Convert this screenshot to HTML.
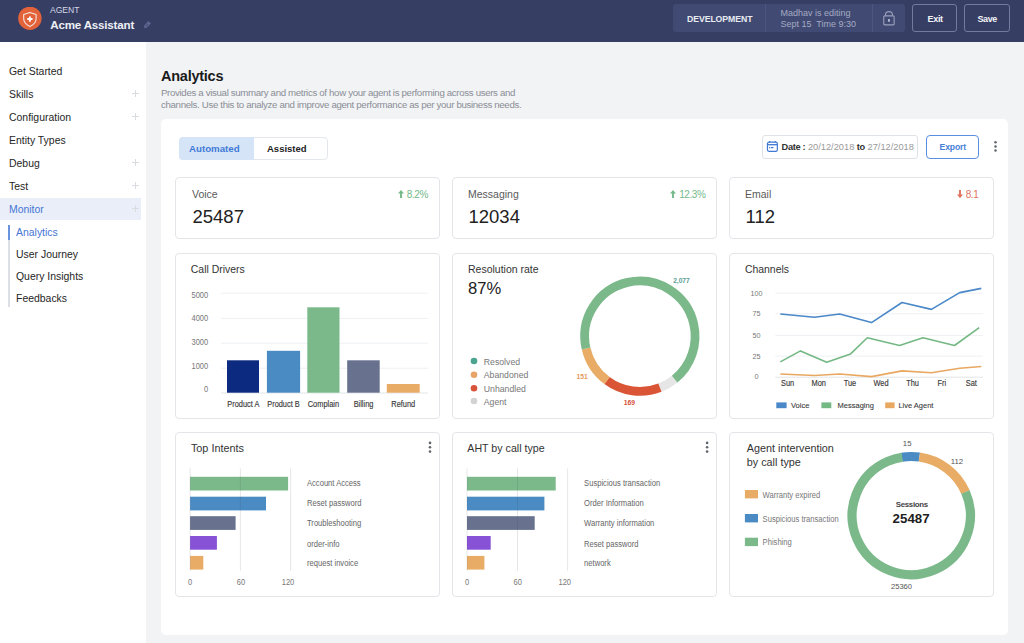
<!DOCTYPE html>
<html><head><meta charset="utf-8">
<style>
*{box-sizing:border-box;margin:0;padding:0}
html,body{width:1024px;height:643px;overflow:hidden;background:#f2f3f5;font-family:"Liberation Sans",sans-serif;color:#2b2b2b}
.a{position:absolute;white-space:nowrap}
#hdr{position:absolute;left:0;top:0;width:1024px;height:42px;background:#363e64}
#side{position:absolute;left:0;top:42px;width:146px;height:601px;background:#fff}
.nav{position:absolute;left:9px;font-size:10.45px;color:#262626}
.plus{position:absolute;left:131.5px;width:7px;height:7px;margin-top:0.1px}
.plus:before,.plus:after{content:"";position:absolute;background:#d9dce1}
.plus:before{left:3px;top:0;width:1px;height:7px}
.plus:after{left:0;top:3px;width:7px;height:1px}
#panel{position:absolute;left:160.5px;top:119px;width:847.5px;height:516px;background:#fff;border-radius:5px}
.card{position:absolute;background:#fff;border:1px solid #e3e5e9;border-radius:4px}
.ttl{position:absolute;font-size:11px;color:#333}
.stl{font-size:10.5px;color:#5a5a5a}
.stn{font-size:18.5px;color:#222}
.up{font-size:10px;letter-spacing:-0.4px;color:#74b98a}
.dn{font-size:10px;letter-spacing:-0.4px;color:#e0725e}
.arr{font-weight:700}
</style></head><body>
<div id="hdr">
  <svg class="a" style="left:18px;top:7px" width="24" height="24" viewBox="0 0 24 24">
    <circle cx="11.9" cy="11.35" r="11.7" fill="#e2623a"/>
    <path d="M5.7 7.4 L11.9 5.4 L18.1 7.4 V11.6 C18.1 15.2 15.6 17.9 11.9 19.4 C8.2 17.9 5.7 15.2 5.7 11.6 Z" fill="none" stroke="#f6e6e0" stroke-width="1.1" stroke-linejoin="round"/>
    <path d="M11.9 9.4 V14.7 M9.25 12.05 H14.55" stroke="#fff" stroke-width="1.9"/>
  </svg>
  <div class="a" style="left:50px;top:5.3px;font-size:8.6px;color:#d5d8e4;letter-spacing:-0.05px">AGENT</div>
  <div class="a" style="left:50.3px;top:17.9px;font-size:11.6px;font-weight:700;color:#eef0f6;letter-spacing:-0.2px">Acme Assistant</div>
  <svg class="a" style="left:143px;top:20px" width="9" height="9" viewBox="0 0 9 9"><path d="M5.5 0.9 L8 3.4 L3.5 7.9 L1.1 8.1 L1.1 5.4 Z" fill="#5c658e"/><path d="M2.6 6.3 L4.9 4" stroke="#3a4268" stroke-width="0.8"/></svg>
  <div class="a" style="left:673px;top:4px;width:232px;height:28px;background:#414a72;border-radius:3px"></div>
  <div class="a" style="left:765px;top:4px;width:1px;height:28px;background:#4d5680"></div>
  <div class="a" style="left:872px;top:4px;width:1px;height:28px;background:#4d5680"></div>
  <div class="a" style="left:687px;top:12.5px;font-size:9.8px;font-weight:700;color:#e8eaf2;letter-spacing:-0.1px;transform:scaleX(0.89);transform-origin:0 0">DEVELOPMENT</div>
  <div class="a" style="left:780.5px;top:7.9px;font-size:9px;line-height:11px;color:#a4aac4">Madhav is editing<br>Sept 15&nbsp; Time 9:30</div>
  <svg class="a" style="left:882px;top:10px" width="14" height="17" viewBox="0 0 14 17">
    <path d="M3.5 5.8 V4.6 C3.5 2.6 5 1.6 6.95 1.6 C8.9 1.6 10.4 2.6 10.4 4.6 V5.8" fill="none" stroke="#9aa0bc" stroke-width="1.1"/>
    <rect x="1.75" y="5.85" width="10.4" height="9" rx="1" fill="none" stroke="#9aa0bc" stroke-width="1.1"/>
    <path d="M6.95 9.1 C7.7 9.1 8.1 9.6 7.95 10.3 L7.5 11.9 H6.4 L5.95 10.3 C5.8 9.6 6.2 9.1 6.95 9.1 Z" fill="#b4b9d0"/>
  </svg>
  <div class="a" style="left:912px;top:4px;width:45px;height:28px;border:1px solid #737b9d;border-radius:3px"></div>
  <div class="a" style="left:964px;top:4px;width:46px;height:28px;border:1px solid #737b9d;border-radius:3px"></div>
  <div class="a" style="left:927.5px;top:13.5px;font-size:9px;font-weight:700;color:#f2f3f7;letter-spacing:-0.3px">Exit</div>
  <div class="a" style="left:977.5px;top:13.5px;font-size:9px;font-weight:700;color:#f2f3f7;letter-spacing:-0.4px">Save</div>
</div>

<div id="side">
  <div class="nav a" style="top:24.2px">Get Started</div>
  <div class="nav a" style="top:47.2px">Skills</div><div class="plus" style="top:48px"></div>
  <div class="nav a" style="top:70.2px">Configuration</div><div class="plus" style="top:71px"></div>
  <div class="nav a" style="top:93.2px">Entity Types</div>
  <div class="nav a" style="top:116.2px">Debug</div><div class="plus" style="top:117px"></div>
  <div class="nav a" style="top:139.2px">Test</div><div class="plus" style="top:140px"></div>
  <div class="a" style="left:0;top:156px;width:141px;height:22px;background:#e9eef9"></div>
  <div class="nav a" style="top:162.2px;color:#4676d4">Monitor</div><div class="plus" style="top:163px"></div>
  <div class="a" style="left:8.3px;top:182.5px;width:1.7px;height:82px;background:#dcdfe4"></div>
  <div class="a" style="left:8.3px;top:182.5px;width:1.7px;height:15px;background:#6a94de"></div>
  <div class="nav a" style="left:16px;top:185.2px;color:#4676d4">Analytics</div>
  <div class="nav a" style="left:16px;top:207.2px">User Journey</div>
  <div class="nav a" style="left:16px;top:229.2px">Query Insights</div>
  <div class="nav a" style="left:16px;top:251.2px">Feedbacks</div>
</div>

<div class="a" style="left:161px;top:68px;font-size:14.5px;font-weight:700;color:#1b1b1b;letter-spacing:-0.25px">Analytics</div>
<div class="a" style="left:161px;top:86.5px;font-size:9.7px;letter-spacing:-0.34px;line-height:12px;color:#8a8e96">Provides a visual summary and metrics of how your agent is performing across users and<br>channels. Use this to analyze and improve agent performance as per your business needs.</div>

<div id="panel"></div>
<!-- tabs -->
<div class="a" style="left:179px;top:137px;width:149px;height:23px;border:1px solid #e3e6eb;border-radius:4px;background:#fff"></div>
<div class="a" style="left:179px;top:137px;width:75px;height:23px;background:#d6e4f8;border-radius:4px 0 0 4px"></div>
<div class="a" style="left:189px;top:143px;font-size:9.7px;font-weight:700;color:#3f7ad6;letter-spacing:0">Automated</div>
<div class="a" style="left:267px;top:143px;font-size:9.5px;font-weight:700;color:#222">Assisted</div>
<!-- date -->
<div class="a" style="left:762px;top:135px;width:156px;height:24px;border:1px solid #dfe2e7;border-radius:3px"></div>
<svg class="a" style="left:766px;top:140px" width="13" height="13" viewBox="0 0 13 13">
 <rect x="1.45" y="2.1" width="9.9" height="9.3" rx="1.6" fill="none" stroke="#3f7ad6" stroke-width="1.2"/>
 <path d="M1.5 4.7 H11.3" stroke="#3f7ad6" stroke-width="1.3"/>
 <path d="M3.6 1 V2.6 M9.2 1 V2.6" stroke="#3f7ad6" stroke-width="1.1"/>
 <circle cx="3.6" cy="7.7" r="0.65" fill="#3f7ad6"/><path d="M5.3 7.7 H7" stroke="#3f7ad6" stroke-width="1.2" stroke-linecap="round"/>
</svg>
<div class="a" style="left:781.5px;top:142px;font-size:9.25px;color:#9a9a9a"><b style="color:#333;letter-spacing:-0.3px">Date :</b> 20/12/2018 <b style="color:#333;letter-spacing:-0.3px">to</b> 27/12/2018</div>
<!-- export -->
<div class="a" style="left:926px;top:135px;width:53px;height:24px;border:1px solid #5a8ee0;border-radius:4px"></div>
<div class="a" style="left:939.5px;top:141.6px;font-size:8.6px;font-weight:700;color:#4680d8;letter-spacing:-0.1px">Export</div>
<svg class="a" style="left:993px;top:140px" width="5" height="13"><circle cx="2.5" cy="2.3" r="1.25" fill="#62666e"/><circle cx="2.5" cy="6.45" r="1.25" fill="#62666e"/><circle cx="2.5" cy="10.6" r="1.25" fill="#62666e"/></svg>

<!-- stat cards -->
<div class="card" style="left:175px;top:177px;width:265px;height:62px"></div>
<div class="card" style="left:452px;top:177px;width:265px;height:62px"></div>
<div class="card" style="left:729px;top:177px;width:265px;height:62px"></div>
<div class="a stl" style="left:192px;top:188px">Voice</div>
<div class="a stn" style="left:192.5px;top:206px">25487</div>
<div class="a stl" style="left:468px;top:188px">Messaging</div>
<div class="a stn" style="left:468.5px;top:206px">12034</div>
<div class="a stl" style="left:745px;top:188px">Email</div>
<div class="a stn" style="left:745.5px;top:206px">112</div>
<svg class="a" style="left:398px;top:189.8px" width="6" height="8.2" viewBox="0 0 6 8.2"><path d="M3 0 L6 3.6 H3.95 V8.2 H2.05 V3.6 H0 Z" fill="#74b98a"/></svg><div class="a up" style="right:596px;top:188.8px">8.2%</div>
<svg class="a" style="left:670px;top:189.8px" width="6" height="8.2" viewBox="0 0 6 8.2"><path d="M3 0 L6 3.6 H3.95 V8.2 H2.05 V3.6 H0 Z" fill="#74b98a"/></svg><div class="a up" style="right:318.5px;top:188.8px">12.3%</div>
<svg class="a" style="left:957px;top:189.8px" width="6" height="8.2" viewBox="0 0 6 8.2"><path d="M3 8.2 L6 4.6 H3.95 V0 H2.05 V4.6 H0 Z" fill="#e0725e"/></svg><div class="a dn" style="right:45.6px;top:188.8px">8.1</div>

<!-- chart cards -->
<div class="card" style="left:175px;top:253px;width:265px;height:166px"></div>
<div class="card" style="left:452px;top:253px;width:265px;height:166px"></div>
<div class="card" style="left:729px;top:253px;width:265px;height:166px"></div>
<div class="card" style="left:175px;top:432px;width:265px;height:165px"></div>
<div class="card" style="left:452px;top:432px;width:265px;height:165px"></div>
<div class="card" style="left:729px;top:432px;width:265px;height:165px"></div>

<!--SVG--><svg class="a" style="left:0;top:0" width="1024" height="643" viewBox="0 0 1024 643" font-family="Liberation Sans">
<text x="190.8" y="273.2" font-size="11.40" fill="#333" text-anchor="start" font-weight="400" textLength="54.00" lengthAdjust="spacingAndGlyphs">Call Drivers</text>
<text x="468" y="273.2" font-size="11.40" fill="#333" text-anchor="start" font-weight="400" textLength="70.62" lengthAdjust="spacingAndGlyphs">Resolution rate</text>
<text x="744.9" y="273.2" font-size="11.40" fill="#333" text-anchor="start" font-weight="400" textLength="44.15" lengthAdjust="spacingAndGlyphs">Channels</text>
<text x="190.9" y="452.2" font-size="11.40" fill="#333" text-anchor="start" font-weight="400" textLength="53.08" lengthAdjust="spacingAndGlyphs">Top Intents</text>
<text x="467.3" y="452.2" font-size="11.40" fill="#333" text-anchor="start" font-weight="400" textLength="77.34" lengthAdjust="spacingAndGlyphs">AHT by call type</text>
<text x="746.8" y="452.2" font-size="11.40" fill="#333" text-anchor="start" font-weight="400" textLength="87.06" lengthAdjust="spacingAndGlyphs">Agent intervention</text>
<text x="746.8" y="465.9" font-size="11.40" fill="#333" text-anchor="start" font-weight="400" textLength="54.03" lengthAdjust="spacingAndGlyphs">by call type</text>
<rect x="221" y="292.7" width="207" height="1" fill="#eef0f3"/>
<rect x="221" y="317.9" width="207" height="1" fill="#eef0f3"/>
<rect x="221" y="342.7" width="207" height="1" fill="#eef0f3"/>
<rect x="221" y="367.7" width="207" height="1" fill="#eef0f3"/>
<rect x="221" y="392.5" width="207" height="1" fill="#e3e5e9"/>
<text x="208.2" y="297.71" font-size="8.40" fill="#777" text-anchor="end" font-weight="400" textLength="16.68" lengthAdjust="spacingAndGlyphs">5000</text>
<text x="208.2" y="321.41" font-size="8.40" fill="#777" text-anchor="end" font-weight="400" textLength="16.68" lengthAdjust="spacingAndGlyphs">4000</text>
<text x="208.2" y="345.41" font-size="8.40" fill="#777" text-anchor="end" font-weight="400" textLength="16.68" lengthAdjust="spacingAndGlyphs">3000</text>
<text x="208.2" y="368.71" font-size="8.40" fill="#777" text-anchor="end" font-weight="400" textLength="16.68" lengthAdjust="spacingAndGlyphs">1000</text>
<text x="208.2" y="392.21" font-size="8.40" fill="#777" text-anchor="end" font-weight="400" textLength="4.17" lengthAdjust="spacingAndGlyphs">0</text>
<rect x="227" y="360.3" width="32" height="32.39999999999998" fill="#0b2a80"/>
<rect x="266.9" y="350.8" width="33.200000000000045" height="41.89999999999998" fill="#4a8bc4"/>
<rect x="307.3" y="307.3" width="32.19999999999999" height="85.39999999999998" fill="#7bb98a"/>
<rect x="347.2" y="360.3" width="32.5" height="32.39999999999998" fill="#68728f"/>
<rect x="386.8" y="384" width="32.89999999999998" height="8.699999999999989" fill="#e8ac66"/>
<text x="243.3" y="406.97" font-size="8.29" fill="#3a3a3a" text-anchor="middle" font-weight="400" textLength="32.09" lengthAdjust="spacingAndGlyphs" stroke="#3a3a3a" stroke-width="0.15">Product A</text>
<text x="283.5" y="406.97" font-size="8.29" fill="#3a3a3a" text-anchor="middle" font-weight="400" textLength="32.49" lengthAdjust="spacingAndGlyphs" stroke="#3a3a3a" stroke-width="0.15">Product B</text>
<text x="323.4" y="406.97" font-size="8.29" fill="#3a3a3a" text-anchor="middle" font-weight="400" textLength="31.26" lengthAdjust="spacingAndGlyphs" stroke="#3a3a3a" stroke-width="0.15">Complain</text>
<text x="363.5" y="406.97" font-size="8.29" fill="#3a3a3a" text-anchor="middle" font-weight="400" textLength="19.74" lengthAdjust="spacingAndGlyphs" stroke="#3a3a3a" stroke-width="0.15">Billing</text>
<text x="403.3" y="406.97" font-size="8.29" fill="#3a3a3a" text-anchor="middle" font-weight="400" textLength="23.86" lengthAdjust="spacingAndGlyphs" stroke="#3a3a3a" stroke-width="0.15">Refund</text>
<text x="468" y="294.1" font-size="16.60" fill="#222" text-anchor="start" font-weight="400">87%</text>
<circle cx="639.9" cy="336.2" r="55.2" fill="none" stroke="#e6e6e6" stroke-width="8.8" stroke-dasharray="17.53 346.83" transform="rotate(50.5 639.9 336.2)"/>
<circle cx="639.9" cy="336.2" r="55.2" fill="none" stroke="#d95535" stroke-width="8.8" stroke-dasharray="55.69 346.83" transform="rotate(68.7 639.9 336.2)"/>
<circle cx="639.9" cy="336.2" r="55.2" fill="none" stroke="#e8ac66" stroke-width="8.8" stroke-dasharray="39.11 346.83" transform="rotate(126.5 639.9 336.2)"/>
<circle cx="639.9" cy="336.2" r="55.2" fill="none" stroke="#7bb98a" stroke-width="8.8" stroke-dasharray="234.50 346.83" transform="rotate(167.1 639.9 336.2)"/>
<text x="681.4" y="282.66" font-size="6.60" fill="#5a9e94" text-anchor="middle" font-weight="700">2,077</text>
<text x="582.2" y="379.03" font-size="6.80" fill="#e59a5c" text-anchor="middle" font-weight="700">151</text>
<text x="629.4" y="404.93" font-size="6.80" fill="#d4533b" text-anchor="middle" font-weight="700">169</text>
<circle cx="474" cy="361" r="3.3" fill="#4aa48f"/>
<text x="483.8" y="364.79" font-size="9.22" fill="#777" text-anchor="start" font-weight="400" textLength="36.27" lengthAdjust="spacingAndGlyphs">Resolved</text>
<circle cx="474" cy="374.7" r="3.3" fill="#e8a466"/>
<text x="483.8" y="378.49" font-size="9.22" fill="#777" text-anchor="start" font-weight="400" textLength="44.51" lengthAdjust="spacingAndGlyphs">Abandoned</text>
<circle cx="474" cy="388.3" r="3.3" fill="#d9533a"/>
<text x="483.8" y="392.09" font-size="9.22" fill="#777" text-anchor="start" font-weight="400" textLength="42.09" lengthAdjust="spacingAndGlyphs">Unhandled</text>
<circle cx="474" cy="401" r="3.3" fill="#d3d3d3"/>
<text x="483.8" y="404.79" font-size="9.22" fill="#777" text-anchor="start" font-weight="400" textLength="22.74" lengthAdjust="spacingAndGlyphs">Agent</text>
<rect x="775.3" y="292.7" width="207.5" height="1" fill="#eef0f3"/>
<rect x="775.3" y="313.3" width="207.5" height="1" fill="#eef0f3"/>
<rect x="775.3" y="334.9" width="207.5" height="1" fill="#eef0f3"/>
<rect x="775.3" y="355.6" width="207.5" height="1" fill="#eef0f3"/>
<rect x="775.3" y="376.7" width="207.5" height="1" fill="#e3e5e9"/>
<text x="756.4" y="296.06" font-size="7.99" fill="#777" text-anchor="middle" font-weight="400" textLength="12.01" lengthAdjust="spacingAndGlyphs">100</text>
<text x="756.4" y="316.46" font-size="7.99" fill="#777" text-anchor="middle" font-weight="400" textLength="8.01" lengthAdjust="spacingAndGlyphs">75</text>
<text x="756.4" y="338.06" font-size="7.99" fill="#777" text-anchor="middle" font-weight="400" textLength="8.01" lengthAdjust="spacingAndGlyphs">50</text>
<text x="756.4" y="359.06" font-size="7.99" fill="#777" text-anchor="middle" font-weight="400" textLength="8.01" lengthAdjust="spacingAndGlyphs">25</text>
<text x="756.4" y="379.46" font-size="7.99" fill="#777" text-anchor="middle" font-weight="400" textLength="4.00" lengthAdjust="spacingAndGlyphs">0</text>
<polyline points="780.3,374 814.5,375.5 839.7,374 871.5,376.6 902,370.9 931.4,372.8 959.7,368.2 981.3,366.5" fill="none" stroke="#e8a862" stroke-width="1.6" stroke-linejoin="round"/>
<polyline points="780.3,361.9 800.5,350.9 826.7,362.3 850.6,353.9 867.3,337.7 899.5,345.5 923,337.7 954.5,345.5 979.2,327.6" fill="none" stroke="#74b884" stroke-width="1.6" stroke-linejoin="round"/>
<polyline points="780.3,314 814.5,317.2 839.7,314 871.5,322.6 902,302.5 931.4,309.4 959.7,292.6 981.3,288.4" fill="none" stroke="#4a88c8" stroke-width="1.6" stroke-linejoin="round"/>
<text x="787.6" y="385.84" font-size="8.14" fill="#3a3a3a" text-anchor="middle" font-weight="400" textLength="13.17" lengthAdjust="spacingAndGlyphs" stroke="#3a3a3a" stroke-width="0.15">Sun</text>
<text x="818.8" y="385.84" font-size="8.14" fill="#3a3a3a" text-anchor="middle" font-weight="400" textLength="14.40" lengthAdjust="spacingAndGlyphs" stroke="#3a3a3a" stroke-width="0.15">Mon</text>
<text x="849.9" y="385.84" font-size="8.14" fill="#3a3a3a" text-anchor="middle" font-weight="400" textLength="12.48" lengthAdjust="spacingAndGlyphs" stroke="#3a3a3a" stroke-width="0.15">Tue</text>
<text x="881" y="385.84" font-size="8.14" fill="#3a3a3a" text-anchor="middle" font-weight="400" textLength="15.08" lengthAdjust="spacingAndGlyphs" stroke="#3a3a3a" stroke-width="0.15">Wed</text>
<text x="912.5" y="385.84" font-size="8.14" fill="#3a3a3a" text-anchor="middle" font-weight="400" textLength="12.75" lengthAdjust="spacingAndGlyphs" stroke="#3a3a3a" stroke-width="0.15">Thu</text>
<text x="941.9" y="385.84" font-size="8.14" fill="#3a3a3a" text-anchor="middle" font-weight="400" textLength="8.63" lengthAdjust="spacingAndGlyphs" stroke="#3a3a3a" stroke-width="0.15">Fri</text>
<text x="971.3" y="385.84" font-size="8.14" fill="#3a3a3a" text-anchor="middle" font-weight="400" textLength="11.11" lengthAdjust="spacingAndGlyphs" stroke="#3a3a3a" stroke-width="0.15">Sat</text>
<rect x="776.3" y="402.4" width="10.300000000000068" height="5.8" fill="#4a88c8"/>
<text x="791" y="408.13" font-size="7.88" fill="#3a3a3a" text-anchor="start" font-weight="400" textLength="18.35" lengthAdjust="spacingAndGlyphs" stroke="#3a3a3a" stroke-width="0.1">Voice</text>
<rect x="821.4" y="402.4" width="9.899999999999977" height="5.8" fill="#74b884"/>
<text x="837.6" y="408.13" font-size="7.88" fill="#3a3a3a" text-anchor="start" font-weight="400" textLength="36.27" lengthAdjust="spacingAndGlyphs" stroke="#3a3a3a" stroke-width="0.1">Messaging</text>
<rect x="885.2" y="402.4" width="9.399999999999977" height="5.8" fill="#e8a862"/>
<text x="898.4" y="408.13" font-size="7.88" fill="#3a3a3a" text-anchor="start" font-weight="400" textLength="35.03" lengthAdjust="spacingAndGlyphs" stroke="#3a3a3a" stroke-width="0.1">Live Agent</text>
<rect x="190.1" y="476.8" width="98.00000000000003" height="13.7" fill="#7bb98a"/>
<rect x="190.1" y="496.7" width="75.9" height="13.7" fill="#4a8bc4"/>
<rect x="190.1" y="516.2" width="45.5" height="13.7" fill="#68728f"/>
<rect x="190.1" y="536" width="26.80000000000001" height="13.7" fill="#8752d6"/>
<rect x="190.1" y="555.9" width="13.200000000000017" height="13.7" fill="#e8ac66"/>
<rect x="189.6" y="468.4" width="1" height="102.4" fill="rgba(60,60,80,0.13)"/>
<rect x="239.9" y="468.4" width="1" height="102.4" fill="rgba(60,60,80,0.13)"/>
<rect x="290.1" y="468.4" width="1" height="102.4" fill="rgba(60,60,80,0.13)"/>
<text x="307" y="486.34" font-size="8.21" fill="#666" text-anchor="start" font-weight="400" textLength="53.65" lengthAdjust="spacingAndGlyphs">Account Access</text>
<text x="307" y="506.04" font-size="8.21" fill="#666" text-anchor="start" font-weight="400" textLength="54.49" lengthAdjust="spacingAndGlyphs">Reset password</text>
<text x="307" y="525.74" font-size="8.21" fill="#666" text-anchor="start" font-weight="400" textLength="54.22" lengthAdjust="spacingAndGlyphs">Troubleshooting</text>
<text x="307" y="546.74" font-size="8.21" fill="#666" text-anchor="start" font-weight="400" textLength="32.53" lengthAdjust="spacingAndGlyphs">order-info</text>
<text x="307" y="565.94" font-size="8.21" fill="#666" text-anchor="start" font-weight="400" textLength="51.12" lengthAdjust="spacingAndGlyphs">request invoice</text>
<text x="190.1" y="585.24" font-size="8.25" fill="#777" text-anchor="middle" font-weight="400" textLength="4.17" lengthAdjust="spacingAndGlyphs">0</text>
<text x="240.9" y="585.24" font-size="8.25" fill="#777" text-anchor="middle" font-weight="400" textLength="8.34" lengthAdjust="spacingAndGlyphs">60</text>
<text x="288" y="585.24" font-size="8.25" fill="#777" text-anchor="middle" font-weight="400" textLength="12.51" lengthAdjust="spacingAndGlyphs">120</text>
<rect x="467" y="476.8" width="88.70000000000005" height="13.7" fill="#7bb98a"/>
<rect x="467" y="496.7" width="77.39999999999998" height="13.7" fill="#4a8bc4"/>
<rect x="467" y="516.2" width="67.70000000000005" height="13.7" fill="#68728f"/>
<rect x="467" y="536" width="23.69999999999999" height="13.7" fill="#8752d6"/>
<rect x="467" y="555.9" width="17.399999999999977" height="13.7" fill="#e8ac66"/>
<rect x="466.5" y="468.4" width="1" height="102.4" fill="rgba(60,60,80,0.13)"/>
<rect x="517.0" y="468.4" width="1" height="102.4" fill="rgba(60,60,80,0.13)"/>
<rect x="567.1" y="468.4" width="1" height="102.4" fill="rgba(60,60,80,0.13)"/>
<text x="584.1" y="486.34" font-size="8.21" fill="#666" text-anchor="start" font-weight="400" textLength="76.04" lengthAdjust="spacingAndGlyphs">Suspicious transaction</text>
<text x="584.1" y="506.04" font-size="8.21" fill="#666" text-anchor="start" font-weight="400" textLength="59.56" lengthAdjust="spacingAndGlyphs">Order Information</text>
<text x="584.1" y="525.74" font-size="8.21" fill="#666" text-anchor="start" font-weight="400" textLength="70.25" lengthAdjust="spacingAndGlyphs">Warranty information</text>
<text x="584.1" y="546.74" font-size="8.21" fill="#666" text-anchor="start" font-weight="400" textLength="54.49" lengthAdjust="spacingAndGlyphs">Reset password</text>
<text x="584.1" y="565.94" font-size="8.21" fill="#666" text-anchor="start" font-weight="400" textLength="26.61" lengthAdjust="spacingAndGlyphs">network</text>
<text x="467" y="585.34" font-size="8.25" fill="#777" text-anchor="middle" font-weight="400" textLength="4.17" lengthAdjust="spacingAndGlyphs">0</text>
<text x="517.7" y="585.34" font-size="8.25" fill="#777" text-anchor="middle" font-weight="400" textLength="8.34" lengthAdjust="spacingAndGlyphs">60</text>
<text x="564.8" y="585.34" font-size="8.25" fill="#777" text-anchor="middle" font-weight="400" textLength="12.51" lengthAdjust="spacingAndGlyphs">120</text>
<circle cx="430" cy="442.9" r="1.3" fill="#62666e"/>
<circle cx="430" cy="447.25" r="1.3" fill="#62666e"/>
<circle cx="430" cy="451.6" r="1.3" fill="#62666e"/>
<circle cx="707.1" cy="442.9" r="1.3" fill="#62666e"/>
<circle cx="707.1" cy="447.25" r="1.3" fill="#62666e"/>
<circle cx="707.1" cy="451.6" r="1.3" fill="#62666e"/>
<rect x="744.9" y="490" width="13.1" height="8.4" fill="#e8ac66"/>
<text x="762.6" y="497.54" font-size="8.21" fill="#777" text-anchor="start" font-weight="400" textLength="57.58" lengthAdjust="spacingAndGlyphs">Warranty expired</text>
<rect x="744.9" y="514" width="13.1" height="8.4" fill="#4a8bc4"/>
<text x="762.6" y="521.54" font-size="8.21" fill="#777" text-anchor="start" font-weight="400" textLength="76.04" lengthAdjust="spacingAndGlyphs">Suspicious transaction</text>
<rect x="744.9" y="537.7" width="13.1" height="8.4" fill="#7bb98a"/>
<text x="762.6" y="545.24" font-size="8.21" fill="#777" text-anchor="start" font-weight="400" textLength="29.15" lengthAdjust="spacingAndGlyphs">Phishing</text>
<circle cx="911.25" cy="515.6" r="59.1" fill="none" stroke="#4a8bc4" stroke-width="9.2" stroke-dasharray="17.64 371.34" transform="rotate(260.8 911.25 515.6)"/>
<circle cx="911.25" cy="515.6" r="59.1" fill="none" stroke="#e8ac66" stroke-width="9.2" stroke-dasharray="60.45 371.34" transform="rotate(277.9 911.25 515.6)"/>
<circle cx="911.25" cy="515.6" r="59.1" fill="none" stroke="#7bb98a" stroke-width="9.2" stroke-dasharray="293.25 371.34" transform="rotate(336.5 911.25 515.6)"/>
<text x="911.8" y="506.9" font-size="7.90" fill="#444" text-anchor="middle" font-weight="700" letter-spacing="-0.35">Sessions</text>
<text x="911.1" y="523.3" font-size="13.30" fill="#1e1e1e" text-anchor="middle" font-weight="700">25487</text>
<text x="907.2" y="446.49" font-size="7.80" fill="#555" text-anchor="middle" font-weight="400">15</text>
<text x="956.9" y="463.89" font-size="7.80" fill="#555" text-anchor="middle" font-weight="400">112</text>
<text x="901.5" y="589.42" font-size="7.60" fill="#555" text-anchor="middle" font-weight="400">25360</text>
</svg><!--/SVG-->
</body></html>
